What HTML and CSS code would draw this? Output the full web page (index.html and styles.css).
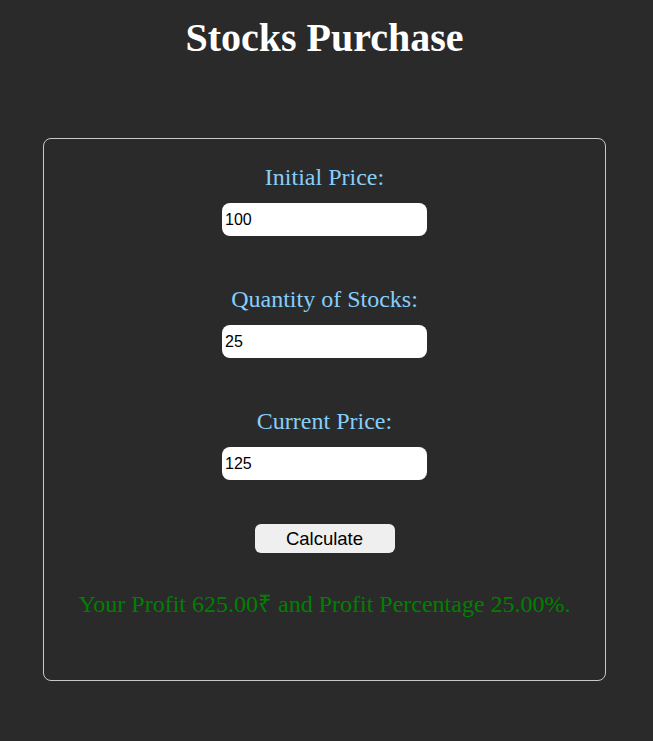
FILE: index.html
```html
<!DOCTYPE html>
<html>
<head>
<meta charset="utf-8">
<link rel="stylesheet" href="styles.css">
</head>
<body>
<div class="page">
  <h1 class="title">Stocks Purchase</h1>
  <div class="card">
    <div class="field">
      <label class="label" for="ip">Initial Price:</label>
      <input class="input" id="ip" type="text" value="100">
    </div>
    <div class="field">
      <label class="label" for="qs">Quantity of Stocks:</label>
      <input class="input" id="qs" type="text" value="25">
    </div>
    <div class="field">
      <label class="label" for="cp">Current Price:</label>
      <input class="input" id="cp" type="text" value="125">
    </div>
    <button class="btn" type="button">Calculate</button>
    <p class="result">Your Profit 625.00₹ and Profit Percentage 25.00%.</p>
  </div>
</div>
</body>
</html>
```
FILE: styles.css
```css
html, body {
  margin: 0;
  padding: 0;
  background: #2a2a2a;
}
body {
  font-family: "Liberation Serif", "Times New Roman", serif;
}
.page {
  width: 633px;
  margin-left: 8px;
  display: flex;
  flex-direction: column;
  align-items: center;
}
.title {
  margin: 15px 0 0;
  font-size: 40px;
  line-height: 46px;
  font-weight: bold;
  color: #ffffff;
  text-align: center;
}
.card {
  box-sizing: border-box;
  width: 563px;
  height: 543px;
  margin-top: 77px;
  border: 1px solid #c8c8c8;
  border-radius: 8px;
  padding: 25px 0 0;
  display: flex;
  flex-direction: column;
  align-items: center;
}
.field {
  display: flex;
  flex-direction: column;
  align-items: center;
  gap: 12px;
  margin-bottom: 50px;
}
.field:last-of-type {
  margin-bottom: 44px;
}
.label {
  font-size: 24px;
  line-height: 27px;
  color: #87cefa;
}
.input {
  box-sizing: border-box;
  width: 205px;
  height: 33px;
  border: none;
  border-radius: 8px;
  background: #ffffff;
  padding: 0 3px;
  font-family: "Liberation Sans", Arial, sans-serif;
  font-size: 16px;
  color: #000;
  outline: none;
}
.btn {
  box-sizing: border-box;
  width: 140px;
  height: 29px;
  border: none;
  border-radius: 6px;
  background: #efefef;
  font-family: "Liberation Sans", Arial, sans-serif;
  font-size: 18.5px;
  color: #000;
  padding: 0;
}
.result {
  margin: 38px 0 0;
  font-size: 24px;
  line-height: 27px;
  color: #008000;
  text-align: center;
}
```
